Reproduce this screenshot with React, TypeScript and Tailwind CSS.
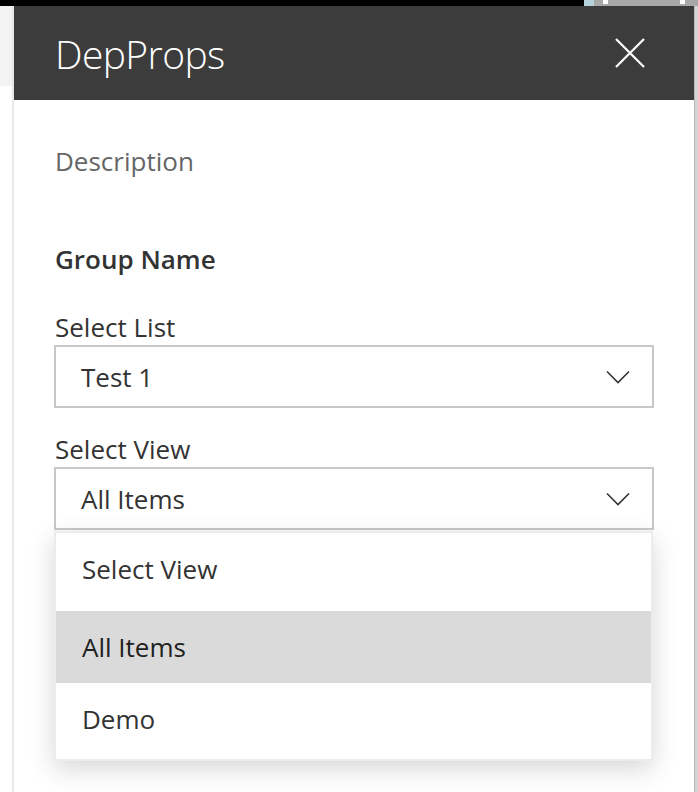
import React from "react";

const font = { fontFamily: '"Open Sans", "Noto Sans", sans-serif' };

function Chevron() {
  return (
    <svg width="24" height="14" viewBox="0 0 24 14" fill="none">
      <path d="M1 1.5 L12 12.5 L23 1.5" stroke="#333333" strokeWidth="1.6" />
    </svg>
  );
}

function Dropdown({ value, children }: { value: string; children?: React.ReactNode }) {
  return (
    <div className="relative">
      <div className="h-[63px] border-2 border-[#c8c8c8] bg-white flex items-center justify-between pl-[25px] pr-[22px]">
        <span className="text-[26px] text-[#333333] leading-none">{value}</span>
        <Chevron />
      </div>
      {children}
    </div>
  );
}

export default function App() {
  return (
    <div className="w-[698px] h-[792px] overflow-hidden bg-white flex flex-col" style={font}>
      {/* top strip */}
      <div className="h-[6px] flex shrink-0">
        <div className="w-[584px] bg-black" />
        <div className="w-[10px] bg-[#b5d2dc]" />
        <div className="flex-1 bg-[#a8a8a8] flex items-start">
          <div className="ml-[9px] w-[5px] h-[4px] bg-white" />
          <div className="ml-[72px] w-[5px] h-[4px] bg-white" />
        </div>
      </div>
      <div className="flex flex-1 min-h-0">
        {/* left sliver */}
        <div className="w-[12px] flex flex-col">
          <div className="h-[80px] bg-[#f3f3f3]" />
          <div className="flex-1 bg-white" />
        </div>
        <div className="w-[2px] bg-[#e8e8e8]" />
        {/* panel */}
        <div className="w-[680px] flex flex-col">
          <div className="h-[94px] bg-[#3c3c3c] flex items-center justify-between pl-[41px] pr-[49px] shrink-0">
            <span className="text-[39px] font-light text-white leading-none tracking-[-0.6px]">DepProps</span>
            <svg width="30" height="30" viewBox="0 0 30 30" fill="none">
              <path d="M1 1 L29 29 M29 1 L1 29" stroke="#ffffff" strokeWidth="2.2" />
            </svg>
          </div>
          <div className="px-[40px] flex flex-col">
            <div className="mt-[45px] h-[32px] flex items-center pl-[1px] text-[26px] text-[#666666]">Description</div>
            <div className="mt-[66px] h-[32px] flex items-center pl-[1px] text-[26px] font-semibold text-[#333333]">Group Name</div>
            <div className="mt-[36px] h-[32px] flex items-center pl-[1px] text-[26px] text-[#333333]">Select List</div>
            <div className="mt-[2px]">
              <Dropdown value="Test 1" />
            </div>
            <div className="mt-[25px] h-[32px] flex items-center pl-[1px] text-[26px] text-[#333333]">Select View</div>
            <div className="mt-[2px]">
              <Dropdown value="All Items">
                <div className="absolute left-0 right-[1px] top-[64px] bg-white border-2 border-[#ececec] shadow-[0_8px_24px_rgba(0,0,0,0.16)] pb-[4px]">
                  <div className="h-[78px] flex items-center pl-[26px] pb-[6px] text-[26px] text-[#333333]">Select View</div>
                  <div className="h-[72px] flex items-center pl-[26px] text-[26px] text-[#212121] bg-[#dadada]">All Items</div>
                  <div className="h-[72px] flex items-center pl-[26px] text-[26px] text-[#333333]">Demo</div>
                </div>
              </Dropdown>
            </div>
          </div>
        </div>
        {/* right scrollbar sliver */}
        <div className="w-[1px] bg-[#b8b8b8]" />
        <div className="flex-1 bg-[#d4d4d4]" />
      </div>
    </div>
  );
}
